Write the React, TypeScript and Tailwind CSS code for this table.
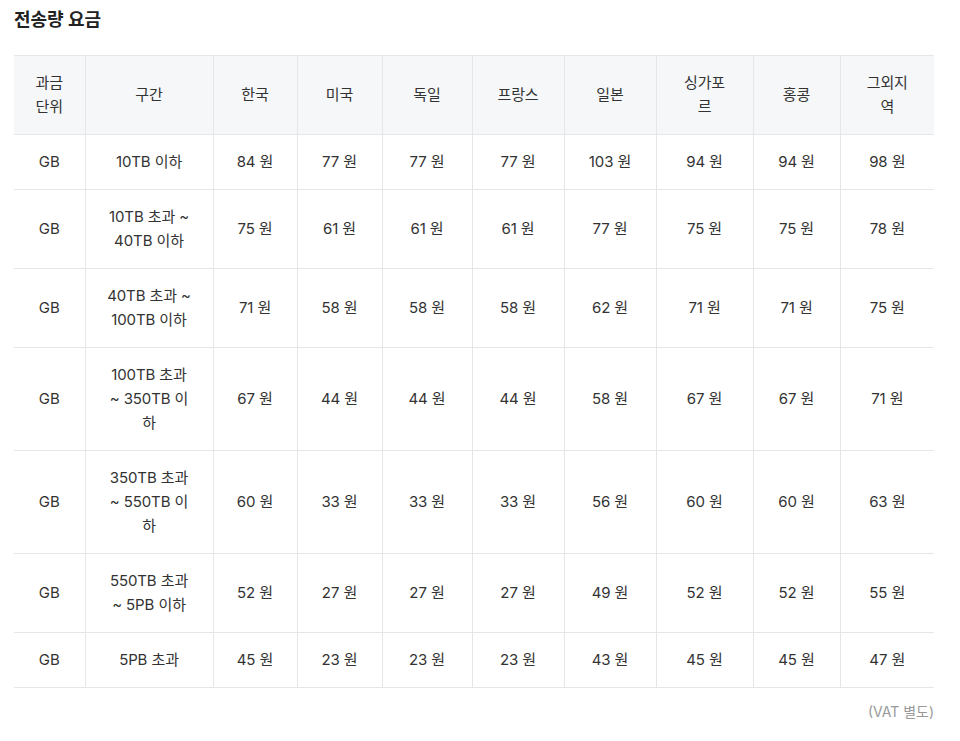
const regions = ["한국", "미국", "독일", "프랑스", "일본", "싱가포르", "홍콩", "그외지역"];

type Row = {
  unit: string;
  range: string[];
  prices: number[];
};

const rows: Row[] = [
  { unit: "GB", range: ["10TB 이하"], prices: [84, 77, 77, 77, 103, 94, 94, 98] },
  { unit: "GB", range: ["10TB 초과 ~", "40TB 이하"], prices: [75, 61, 61, 61, 77, 75, 75, 78] },
  { unit: "GB", range: ["40TB 초과 ~", "100TB 이하"], prices: [71, 58, 58, 58, 62, 71, 71, 75] },
  { unit: "GB", range: ["100TB 초과", "~ 350TB 이", "하"], prices: [67, 44, 44, 44, 58, 67, 67, 71] },
  { unit: "GB", range: ["350TB 초과", "~ 550TB 이", "하"], prices: [60, 33, 33, 33, 56, 60, 60, 63] },
  { unit: "GB", range: ["550TB 초과", "~ 5PB 이하"], prices: [52, 27, 27, 27, 49, 52, 52, 55] },
  { unit: "GB", range: ["5PB 초과"], prices: [45, 23, 23, 23, 43, 45, 45, 47] },
];

// column widths taken from the screenshot
const colWidths = [71, 128, 84, 85, 90, 92, 92, 97, 87, 94];

const headerLines: Record<string, string[]> = {
  싱가포르: ["싱가포", "르"],
  그외지역: ["그외지", "역"],
};

const Lines = ({ lines }: { lines: string[] }) => (
  <>
    {lines.map((l, i) => (
      <span key={i} className="block whitespace-nowrap">
        {l}
      </span>
    ))}
  </>
);

const cell = "border-l border-[#e6e6e6] first:border-l-0 py-[15px] px-2 text-center align-middle leading-6";

export default function App() {
  return (
    <div
      className="bg-white px-[14px] pt-[6px] pb-6 text-[#333] w-[948px]"
      style={{ fontFamily: 'Inter, "Noto Sans CJK KR", "Noto Sans", sans-serif' }}
    >
      <h2 className="text-[18px] font-bold text-[#222] leading-7">전송량 요금</h2>

      <table className="mt-[21px] w-[920px] table-fixed border-collapse text-[15px] tracking-[-0.1px]">
        <colgroup>
          {colWidths.map((w, i) => (
            <col key={i} style={{ width: w }} />
          ))}
        </colgroup>
        <thead>
          <tr className="bg-[#f6f7f9] border-t border-b border-[#e6e6e6]">
            <th className={cell + " font-normal"}>
              <Lines lines={["과금", "단위"]} />
            </th>
            <th className={cell + " font-normal"}>구간</th>
            {regions.map((r) => (
              <th key={r} className={cell + " font-normal"}>
                <Lines lines={headerLines[r] ?? [r]} />
              </th>
            ))}
          </tr>
        </thead>
        <tbody>
          {rows.map((row, i) => (
            <tr key={i} className="border-b border-[#e6e6e6]">
              <td className={cell}>{row.unit}</td>
              <td className={cell}>
                <Lines lines={row.range} />
              </td>
              {row.prices.map((p, j) => (
                <td key={j} className={cell + " whitespace-nowrap"}>
                  {p} 원
                </td>
              ))}
            </tr>
          ))}
        </tbody>
      </table>

      <p className="mt-[12px] w-[920px] text-right text-[14px] text-[#999] leading-6">(VAT 별도)</p>
    </div>
  );
}
